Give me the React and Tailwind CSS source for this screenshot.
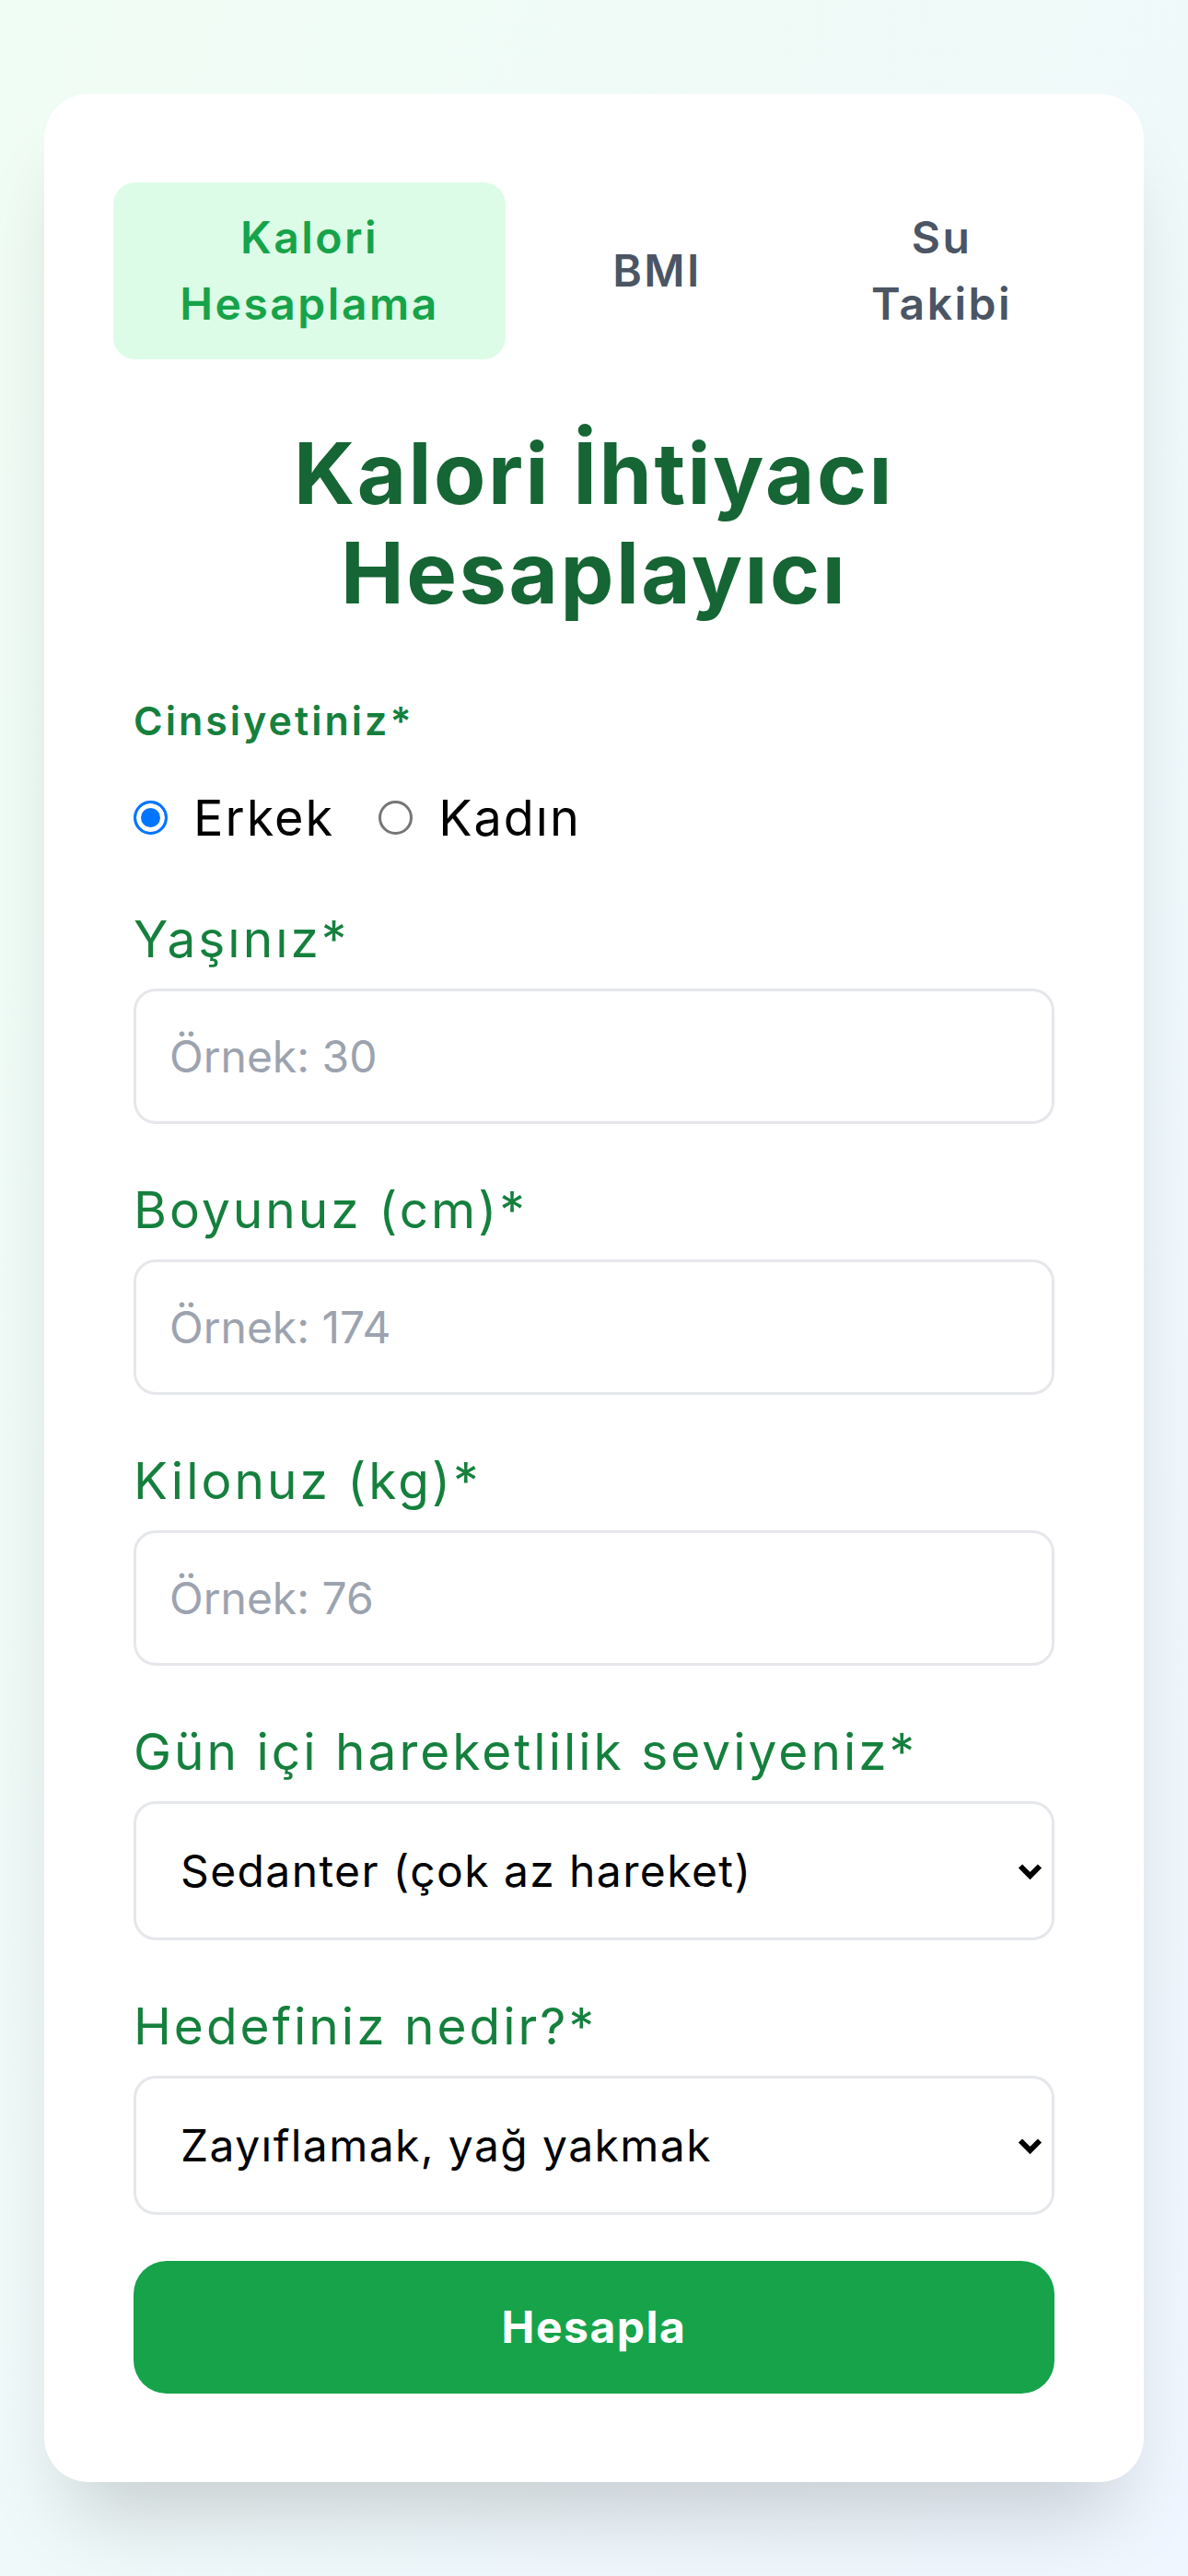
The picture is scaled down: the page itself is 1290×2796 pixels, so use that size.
import React, { useState } from 'react';

const tabs = [
  { id: 'kalori', lines: ['Kalori', 'Hesaplama'] },
  { id: 'bmi', lines: ['BMI'] },
  { id: 'su', lines: ['Su', 'Takibi'] },
];

const Chevron = () => (
  <svg
    className="pointer-events-none absolute right-[13px] top-1/2 -translate-y-1/2"
    width="27"
    height="18"
    viewBox="0 0 27 18"
    fill="none"
  >
    <path d="M3 3.5 L13.5 14 L24 3.5" stroke="#000" strokeWidth="6" />
  </svg>
);

const Field = ({ label, children, first }) => (
  <div className={first ? 'mt-[51px]' : 'mt-[53px]'}>
    <label className="block text-[55px] leading-[81px] tracking-[3px] text-[#15803d] mb-[13px]">{label}</label>
    {children}
  </div>
);

const TextInput = ({ placeholder }) => (
  <input
    type="number"
    placeholder={placeholder}
    className="block w-full h-[147px] rounded-[24px] border-[3px] border-[#e5e7eb] bg-white px-[36px] text-[48px] text-black placeholder:text-[#9ca3af] outline-none"
  />
);

const Select = ({ options }) => (
  <div className="relative">
    <select className="block w-full h-[151px] appearance-none rounded-[24px] border-[3px] border-[#e5e7eb] bg-white pl-[48px] pr-[60px] text-[48px] tracking-[1.4px] text-black outline-none">
      {options.map((o) => (
        <option key={o}>{o}</option>
      ))}
    </select>
    <Chevron />
  </div>
);

const Radio = ({ label, checked, onChange, className = '' }) => (
  <label className={'flex items-center ' + className}>
    <input
      type="radio"
      name="gender"
      checked={checked}
      onChange={onChange}
      className="m-0 h-[37px] w-[37px] appearance-none rounded-full border-[3px] border-[#767676] bg-white checked:border-[#0075ff] checked:bg-[#0075ff] checked:shadow-[inset_0_0_0_5px_#fff]"
    />
    <span className="ml-[28px]">{label}</span>
  </label>
);

export default function App() {
  const [active, setActive] = useState('kalori');
  const [gender, setGender] = useState('erkek');

  return (
    <div className="min-h-screen bg-gradient-to-br from-[#f0fdf4] to-[#eff6ff] px-[48px] py-[102px] font-['Inter',sans-serif]">
      <div className="rounded-[48px] bg-white px-[75px] py-[96px] shadow-[0_60px_90px_-30px_rgba(0,0,0,0.18)]">
        {/* tabs */}
        <div className="grid grid-cols-[426px_1fr_1fr] gap-[20px]">
          {tabs.map((t) => (
            <button
              key={t.id}
              onClick={() => setActive(t.id)}
              className={
                'h-[192px] rounded-[24px] text-[48px] leading-[72px] tracking-[2.5px] font-semibold flex flex-col items-center justify-center ' +
                (active === t.id ? 'bg-[#dcfce7] text-[#16a34a]' : 'text-[#4b5563]')
              }
            >
              {t.lines.map((l) => (
                <span key={l}>{l}</span>
              ))}
            </button>
          ))}
        </div>

        <div className="px-[22px]">
          <h1 className="mt-[70px] text-center text-[92px] leading-[108px] tracking-[2.5px] font-bold text-[#166534]">
            Kalori İhtiyacı
            <br />
            Hesaplayıcı
          </h1>

          <div className="mt-[75px] text-[43px] leading-[63px] tracking-[3px] font-semibold text-[#15803d]">
            Cinsiyetiniz*
          </div>

          <div className="mt-[33px] flex h-[81px] items-center text-[54px] tracking-[2px] text-black">
            <Radio label="Erkek" checked={gender === 'erkek'} onChange={() => setGender('erkek')} />
            <Radio
              label="Kadın"
              className="ml-[48px]"
              checked={gender === 'kadin'}
              onChange={() => setGender('kadin')}
            />
          </div>

          <Field label="Yaşınız*" first>
            <TextInput placeholder="Örnek: 30" />
          </Field>
          <Field label="Boyunuz (cm)*">
            <TextInput placeholder="Örnek: 174" />
          </Field>
          <Field label="Kilonuz (kg)*">
            <TextInput placeholder="Örnek: 76" />
          </Field>
          <Field label="Gün içi hareketlilik seviyeniz*">
            <Select
              options={[
                'Sedanter (çok az hareket)',
                'Az hareketli (haftada 1-3 gün)',
                'Orta hareketli (haftada 3-5 gün)',
                'Çok hareketli (haftada 6-7 gün)',
              ]}
            />
          </Field>
          <Field label="Hedefiniz nedir?*">
            <Select options={['Zayıflamak, yağ yakmak', 'Kilomu korumak', 'Kilo almak, kas yapmak']} />
          </Field>

          <button className="mt-[50px] block h-[144px] w-full rounded-[36px] bg-[#16a34a] text-[48px] tracking-[1.5px] font-bold text-white">
            Hesapla
          </button>
        </div>
      </div>
    </div>
  );
}
